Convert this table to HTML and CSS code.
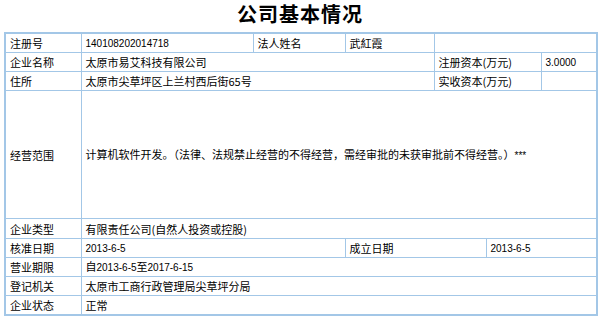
FILE: index.html
```html
<!DOCTYPE html>
<html lang="zh-CN">
<head>
<meta charset="utf-8">
<title>公司基本情况</title>
<link rel="stylesheet" href="styles.css">
</head>
<body>
<div class="page">
  <h1 class="title">公司基本情况</h1>
  <table class="info">
    <colgroup>
      <col class="c1"><col class="c2"><col class="c3"><col class="c4"><col class="c5"><col class="c6"><col class="c7">
    </colgroup>
    <tr>
      <td>注册号</td>
      <td><span class="num">140108202014718</span></td>
      <td>法人姓名</td>
      <td>武紅霞</td>
      <td colspan="3"></td>
    </tr>
    <tr>
      <td>企业名称</td>
      <td colspan="3">太原市易艾科技有限公司</td>
      <td colspan="2">注册资本(万元)</td>
      <td><span class="num">3.0000</span></td>
    </tr>
    <tr>
      <td>住所</td>
      <td colspan="3">太原市尖草坪区上兰村西后街65号</td>
      <td colspan="2">实收资本(万元)</td>
      <td></td>
    </tr>
    <tr class="tall">
      <td>经营范围</td>
      <td colspan="6">计算机软件开发。（法律、法规禁止经营的不得经营，需经审批的未获审批前不得经营。）<span class="num">***</span></td>
    </tr>
    <tr class="r20">
      <td>企业类型</td>
      <td colspan="6">有限责任公司(自然人投资或控股)</td>
    </tr>
    <tr>
      <td>核准日期</td>
      <td colspan="2"><span class="num">2013-6-5</span></td>
      <td colspan="2">成立日期</td>
      <td colspan="2"><span class="num">2013-6-5</span></td>
    </tr>
    <tr>
      <td>营业期限</td>
      <td colspan="6">自<span class="num">2013-6-5</span>至<span class="num">2017-6-15</span></td>
    </tr>
    <tr>
      <td>登记机关</td>
      <td colspan="6">太原市工商行政管理局尖草坪分局</td>
    </tr>
    <tr>
      <td>企业状态</td>
      <td colspan="6">正常</td>
    </tr>
  </table>
</div>
</body>
</html>
```
FILE: styles.css
```css
html, body {
  margin: 0;
  padding: 0;
  background: #ffffff;
}
.page {
  width: 592px;
  padding: 0 4px;
  font-family: "Noto Sans CJK SC", "Noto Sans", sans-serif;
  color: #000;
}
.title {
  margin: 0;
  height: 32px;
  line-height: 28px;
  text-align: center;
  font-size: 20px;
  font-weight: bold;
  letter-spacing: 1px;
}
.info {
  width: 592px;
  table-layout: fixed;
  border-collapse: collapse;
  border: 2px solid #a3c7e7;
  font-size: 11px;
}
.c1 { width: 76px; }
.c2 { width: 172px; }
.c3 { width: 92px; }
.c4 { width: 89px; }
.c5 { width: 52px; }
.c6 { width: 55px; }
.c7 { width: 56px; }
.info td {
  border: 1px solid #a3c7e7;
  padding: 0 4px;
  height: 18px;
  line-height: 14px;
  vertical-align: middle;
  white-space: nowrap;
  overflow: hidden;
}
.info tr.tall td { height: 127px; }
.info tr.r20 td { height: 19px; }
.num {
  font-family: "Liberation Sans", sans-serif;
  font-size: 10px;
}
```
